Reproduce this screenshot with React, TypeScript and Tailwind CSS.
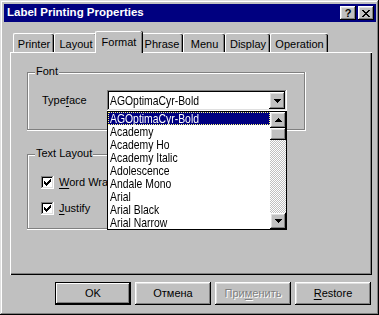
import React from "react";

const raised =
  "shadow-[inset_-1px_-1px_0_#000,inset_1px_1px_0_#dfdfdf,inset_-2px_-2px_0_#808080,inset_2px_2px_0_#fff]";
const raisedBtn =
  "shadow-[inset_-1px_-1px_0_#000,inset_1px_1px_0_#fff,inset_-2px_-2px_0_#808080,inset_2px_2px_0_#dfdfdf]";
const sunken =
  "shadow-[inset_-1px_-1px_0_#fff,inset_1px_1px_0_#808080,inset_-2px_-2px_0_#dfdfdf,inset_2px_2px_0_#000]";
const etched =
  "shadow-[inset_-1px_-1px_0_#fff,inset_-2px_-2px_0_#808080,inset_1px_1px_0_#808080,inset_2px_2px_0_#fff]";

function Arrow({ up = false }: { up?: boolean }) {
  return (
    <svg width="7" height="4" viewBox="0 0 7 4" shapeRendering="crispEdges">
      {up ? (
        <path d="M3 0h1v1h1v1h1v1h1v1H0V3h1V2h1V1h1z" fill="#000" />
      ) : (
        <path d="M0 0h7v1H6v1H5v1H4v1H3V3H2V2H1V1H0z" fill="#000" />
      )}
    </svg>
  );
}

function Check() {
  return (
    <svg width="7" height="7" viewBox="0 0 7 7" shapeRendering="crispEdges">
      <path
        d="M0 2h1v3H0z M1 3h1v3H1z M2 4h1v3H2z M3 3h1v3H3z M4 2h1v3H4z M5 1h1v3H5z M6 0h1v3H6z"
        fill="#000"
      />
    </svg>
  );
}

function CheckBox({ u, rest }: { u: string; rest: string }) {
  return (
    <div className="flex items-center h-[13px]">
      <div className={`w-[13px] h-[13px] bg-white flex items-center justify-center ${sunken}`}>
        <Check />
      </div>
      <span className="ml-[5px] leading-[13px] whitespace-nowrap">
        <span className="underline underline-offset-[2px]">{u}</span>
        {rest}
      </span>
    </div>
  );
}

function Tab({ label, w, active = false }: { label: string; w: number; active?: boolean }) {
  if (active) {
    return (
      <div
        className="relative z-10 h-[22px] -mb-[1px] bg-[#c0c0c0] flex items-start justify-center pt-[2px] border-t border-l border-white rounded-tl-[2px] rounded-tr-[2px] shadow-[inset_-1px_0_0_#808080,1px_0_0_#000]"
        style={{ width: w }}
      >
        {label}
      </div>
    );
  }
  return (
    <div
      className="h-[19px] bg-[#c0c0c0] flex items-start justify-center pt-[2px] border-t border-l border-white rounded-tl-[2px] rounded-tr-[2px] shadow-[inset_-1px_0_0_#000,inset_-2px_0_0_#808080]"
      style={{ width: w }}
    >
      {label}
    </div>
  );
}

function Button({
  children,
  def = false,
}: {
  children: React.ReactNode;
  def?: boolean;
}) {
  const sh = def
    ? "shadow-[inset_0_0_0_1px_#000,inset_-2px_-2px_0_#000,inset_2px_2px_0_#fff,inset_-3px_-3px_0_#808080]"
    : raisedBtn;
  return (
    <div className={`w-[76px] h-[23px] flex items-center justify-center ${sh}`}>{children}</div>
  );
}

const fonts = [
  "AGOptimaCyr-Bold",
  "Academy",
  "Academy Ho",
  "Academy Italic",
  "Adolescence",
  "Andale Mono",
  "Arial",
  "Arial Black",
  "Arial Narrow",
];

function Narrow({ children }: { children: React.ReactNode }) {
  return (
    <span className="inline-block origin-left scale-x-[0.8] text-[13px] leading-[13px] whitespace-nowrap">
      {children}
    </span>
  );
}

export default function App() {
  return (
    <div
      className={`w-[379px] h-[315px] bg-[#c0c0c0] p-[4px] pr-[3px] flex flex-col text-[11px] text-black font-['Liberation_Sans',Arial,sans-serif] ${raised}`}
    >
      {/* Title bar */}
      <div className="h-[18px] bg-[#000080] flex items-center pl-[3px] pr-[2px]">
        <span className="text-white font-bold text-[11.5px] leading-none">
          Label Printing Properties
        </span>
        <div className="ml-auto flex gap-[2px]">
          <div
            className={`w-[16px] h-[14px] bg-[#c0c0c0] flex items-center justify-center font-bold text-[11px] leading-none ${raisedBtn}`}
          >
            ?
          </div>
          <div
            className={`w-[16px] h-[14px] bg-[#c0c0c0] flex items-center justify-center ${raisedBtn}`}
          >
            <svg width="8" height="7" viewBox="0 0 8 7" shapeRendering="crispEdges">
              <path
                d="M0 0h2v1h1v1h2V1h1V0h2v1H7v1H6v1H5v1h1v1h1v1h1v1H6V6H5V5H3v1H2v1H0V6h1V5h1V4h1V3H2V2H1V1H0z"
                fill="#000"
              />
            </svg>
          </div>
        </div>
      </div>

      {/* Body */}
      <div className="flex flex-col pl-[6px] pr-[4px] pt-[9px]">
        {/* Tabs */}
        <div className="h-[21px] flex items-end pl-[3px]">
          <Tab label="Printer" w={41} />
          <Tab label="Layout" w={43} />
          <div className="-mx-[2px] flex items-end">
            <Tab label="Format" w={47} active />
          </div>
          <Tab label="Phrase" w={43} />
          <Tab label="Menu" w={42} />
          <Tab label="Display" w={45} />
          <Tab label="Operation" w={58} />
        </div>

        {/* Panel */}
        <div className="h-[223px] flex flex-col shadow-[inset_1px_1px_0_#fff,inset_-1px_-1px_0_#000,inset_-2px_-2px_0_#808080]">
          {/* Font group */}
          <div className={`mt-[20px] ml-[17px] w-[279px] h-[59px] flex flex-col ${etched}`}>
            <div className="-mt-[7px] ml-[8px] px-[1px] bg-[#c0c0c0] w-fit leading-[13px] h-[13px]">
              Font
            </div>
            <div className="mt-[12px] flex items-center pl-[15px]">
              <span className="w-[65px] leading-[13px]">
                Type<span className="underline underline-offset-[2px]">f</span>ace
              </span>
              <div className="relative">
                <div className={`w-[180px] h-[21px] bg-white flex items-center ${sunken}`}>
                  <span className="flex-1 pl-[3px] leading-none">
                    <Narrow>AGOptimaCyr-Bold</Narrow>
                  </span>
                  <div
                    className={`w-[16px] h-[17px] mr-[2px] bg-[#c0c0c0] flex items-center justify-center ${raisedBtn}`}
                  >
                    <Arrow />
                  </div>
                </div>
                {/* Dropdown list (overlay) */}
                <div className="absolute left-0 top-full z-20 w-[180px] h-[119px] bg-white border border-black flex">
                  <div className="flex-1 flex flex-col">
                    {fonts.map((f, i) => (
                      <div
                        key={f}
                        className={`h-[13px] leading-[13px] pl-[2px] whitespace-nowrap ${
                          i === 0
                            ? "bg-[#000080] text-white outline-1 outline-dotted outline-[#ffff80] -outline-offset-1"
                            : ""
                        }`}
                      >
                        <Narrow>{f}</Narrow>
                      </div>
                    ))}
                  </div>
                  <div className="w-[16px] flex flex-col">
                    <div
                      className={`h-[16px] bg-[#c0c0c0] flex items-center justify-center ${raisedBtn}`}
                    >
                      <Arrow up />
                    </div>
                    <div className={`h-[12px] bg-[#c0c0c0] ${raisedBtn}`} />
                    <div className="flex-1 bg-[repeating-conic-gradient(#c0c0c0_0%_25%,#fff_0%_50%)] bg-[length:2px_2px]" />
                    <div
                      className={`h-[16px] bg-[#c0c0c0] flex items-center justify-center ${raisedBtn}`}
                    >
                      <Arrow />
                    </div>
                  </div>
                </div>
              </div>
            </div>
          </div>

          {/* Text Layout group */}
          <div className={`mt-[23px] ml-[17px] w-[220px] h-[76px] flex flex-col ${etched}`}>
            <div className="-mt-[7px] ml-[8px] px-[1px] bg-[#c0c0c0] w-fit leading-[13px] h-[13px]">
              Text Layout
            </div>
            <div className="mt-[16px] ml-[14px] flex flex-col gap-[13px]">
              <CheckBox u="W" rest="ord Wrap" />
              <CheckBox u="J" rest="ustify" />
            </div>
          </div>
        </div>

        {/* Buttons */}
        <div className="mt-[7px] flex justify-end gap-[4px] pr-[1px]">
          <Button def>OK</Button>
          <Button>Отмена</Button>
          <Button>
            <span className="text-[#808080] [text-shadow:1px_1px_0_#fff]">
              При<span className="underline underline-offset-[2px]">м</span>енить
            </span>
          </Button>
          <Button>
            <span>
              <span className="underline underline-offset-[2px]">R</span>estore
            </span>
          </Button>
        </div>
      </div>
    </div>
  );
}
